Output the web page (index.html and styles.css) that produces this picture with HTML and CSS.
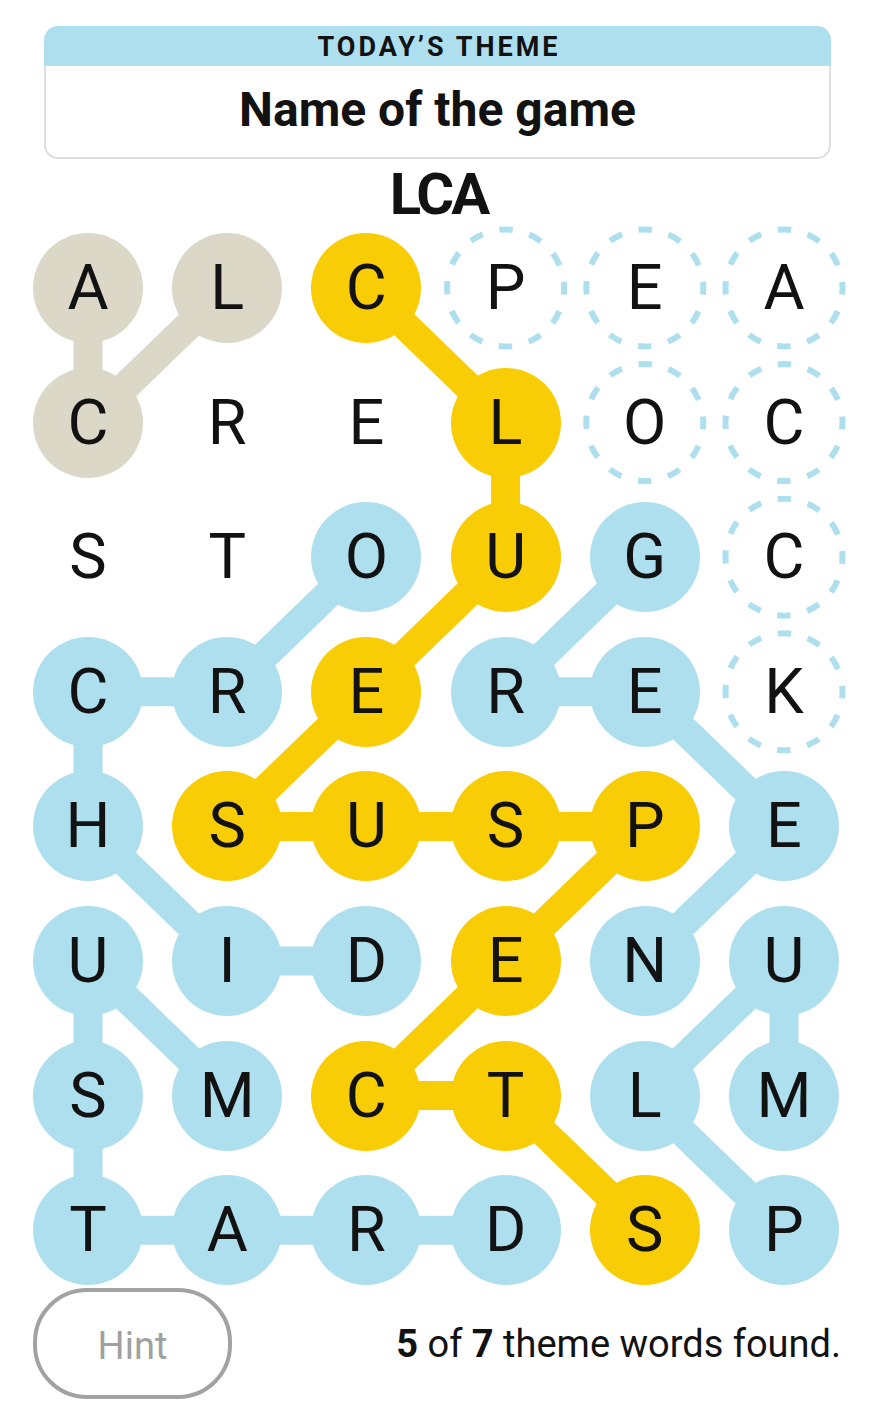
FILE: index.html
```html
<!DOCTYPE html>
<html lang="en">
<head>
<meta charset="utf-8">
<title>Strands</title>
<link rel="stylesheet" href="styles.css">
</head>
<body>
<div class="page">
  <section class="theme">
    <div class="theme-head">TODAY’S THEME</div>
    <div class="theme-body">Name of the game</div>
  </section>
  <div class="current">LCA</div>

  <div class="board">
    <svg class="links" width="806" height="1053" viewBox="0 0 806 1053" aria-hidden="true">
      <g fill="none" stroke-width="29" stroke-linejoin="round" stroke-linecap="butt">
        <polyline class="ln-beige" points="55,55 55,189.6 194.2,55"/>
        <polyline class="ln-blue" points="333.4,324.2 194.2,458.8 55,458.8 55,593.4 194.2,728 333.4,728"/>
        <polyline class="ln-blue" points="611.8,324.2 472.6,458.8 611.8,458.8 751,593.4 611.8,728"/>
        <polyline class="ln-blue" points="194.2,862.6 55,728 55,862.6 55,997.2 472.6,997.2"/>
        <polyline class="ln-blue" points="751,997.2 611.8,862.6 751,728 751,862.6"/>
        <polyline class="ln-yellow" points="333.4,55 472.6,189.6 472.6,324.2 333.4,458.8 194.2,593.4 611.8,593.4 472.6,728 333.4,862.6 472.6,862.6 611.8,997.2"/>
      </g>
      <g class="dash">
        <circle cx="472.6" cy="55" r="58.5"/>
        <circle cx="611.8" cy="55" r="58.5"/>
        <circle cx="751" cy="55" r="58.5"/>
        <circle cx="611.8" cy="189.6" r="58.5"/>
        <circle cx="751" cy="189.6" r="58.5"/>
        <circle cx="751" cy="324.2" r="58.5"/>
        <circle cx="751" cy="458.8" r="58.5"/>
      </g>
    </svg>
    <div class="grid">
      <div class="cell beige">A</div><div class="cell beige">L</div><div class="cell yellow">C</div><div class="cell">P</div><div class="cell">E</div><div class="cell">A</div>
      <div class="cell beige">C</div><div class="cell">R</div><div class="cell">E</div><div class="cell yellow">L</div><div class="cell">O</div><div class="cell">C</div>
      <div class="cell">S</div><div class="cell">T</div><div class="cell blue">O</div><div class="cell yellow">U</div><div class="cell blue">G</div><div class="cell">C</div>
      <div class="cell blue">C</div><div class="cell blue">R</div><div class="cell yellow">E</div><div class="cell blue">R</div><div class="cell blue">E</div><div class="cell">K</div>
      <div class="cell blue">H</div><div class="cell yellow">S</div><div class="cell yellow">U</div><div class="cell yellow">S</div><div class="cell yellow">P</div><div class="cell blue">E</div>
      <div class="cell blue">U</div><div class="cell blue">I</div><div class="cell blue">D</div><div class="cell yellow">E</div><div class="cell blue">N</div><div class="cell blue">U</div>
      <div class="cell blue">S</div><div class="cell blue">M</div><div class="cell yellow">C</div><div class="cell yellow">T</div><div class="cell blue">L</div><div class="cell blue">M</div>
      <div class="cell blue">T</div><div class="cell blue">A</div><div class="cell blue">R</div><div class="cell blue">D</div><div class="cell yellow">S</div><div class="cell blue">P</div>
    </div>
  </div>

  <div class="footer">
    <button class="hint" type="button">Hint</button>
    <p class="found"><b>5</b> of <b>7</b> theme words found.</p>
  </div>
</div>
</body>
</html>
```
FILE: styles.css
```css
html, body {
  margin: 0;
  padding: 0;
  background: #ffffff;
}

body {
  font-family: Roboto, "Liberation Sans", Arial, sans-serif;
  color: #121212;
}

.page {
  width: 882px;
  padding-top: 26px;
}

.theme {
  margin-left: 44px;
  width: 787px;
}

.theme-head {
  background: #aedfee;
  border-radius: 14px 14px 0 0;
  height: 37px;
  padding-top: 3px;
  line-height: 37px;
  text-align: center;
  font-size: 27px;
  font-weight: 700;
  letter-spacing: 3px;
  text-indent: 3px;
  color: #121212;
}

.theme-body {
  border: 2px solid #dedede;
  border-top: none;
  border-radius: 0 0 14px 14px;
  height: 88px;
  padding-bottom: 3px;
  line-height: 88px;
  text-align: center;
  font-size: 48px;
  font-weight: 700;
}

.current {
  height: 70px;
  line-height: 70px;
  margin-bottom: 4px;
  text-align: center;
  font-size: 58px;
  font-weight: 700;
  letter-spacing: -3px;
  text-indent: -5px;
}

.board {
  position: relative;
  margin-left: 33px;
  width: 806px;
  height: 1053px;
}

.links {
  position: absolute;
  left: 0;
  top: 0;
  overflow: visible;
}

.ln-beige { stroke: #dbd8c7; }
.ln-blue { stroke: #aedfee; }
.ln-yellow { stroke: #f8cd05; }

.dash circle {
  fill: none;
  stroke: #aedfee;
  stroke-width: 6;
  stroke-dasharray: 13.5 17.13;
  stroke-dashoffset: 6.75;
}

.grid {
  position: relative;
  display: grid;
  grid-template-columns: repeat(6, 110px);
  grid-auto-rows: 110px;
  column-gap: 29.2px;
  row-gap: 24.6px;
}

.cell {
  width: 110px;
  height: 110px;
  border-radius: 50%;
  display: flex;
  align-items: center;
  justify-content: center;
  font-size: 63px;
  font-weight: 400;
  line-height: 110px;
  color: #121212;
}

.cell.beige { background: #dbd8c7; }
.cell.blue { background: #aedfee; }
.cell.yellow { background: #f8cd05; }

.footer {
  display: flex;
  align-items: center;
  justify-content: space-between;
  margin-top: 2px;
  padding-left: 33px;
  padding-right: 41px;
}

.hint {
  width: 199px;
  height: 111px;
  border: 4px solid #a2a2a2;
  border-radius: 54px;
  background: #ffffff;
  font-family: Roboto, "Liberation Sans", Arial, sans-serif;
  font-size: 38px;
  font-weight: 400;
  color: #a0a0a0;
  padding: 4px 0 0 0;
}

.found {
  margin: 0;
  font-size: 38px;
  font-weight: 400;
  color: #121212;
}

.found b {
  font-weight: 700;
}
```
